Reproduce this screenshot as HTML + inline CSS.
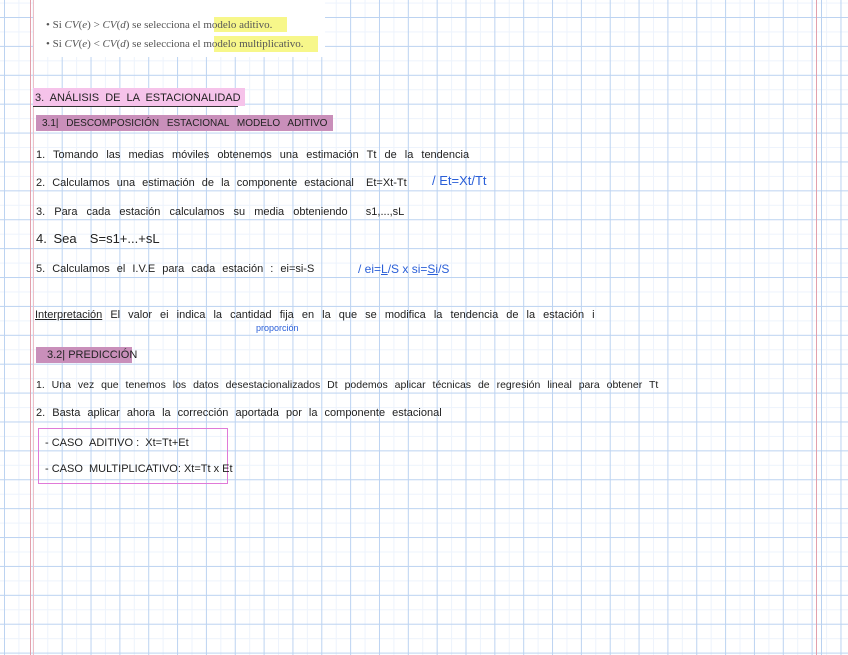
<!DOCTYPE html>
<html><head><meta charset="utf-8"><style>
html,body{margin:0;padding:0}
body{width:848px;height:655px;position:relative;overflow:hidden;background:#fff;
font-family:"Liberation Sans",sans-serif;color:#222;
background-image:
linear-gradient(90deg,transparent 0,transparent 27.85px,#bcd3f1 27.85px,#bcd3f1 28.85px),
linear-gradient(180deg,transparent 0,transparent 27.9px,#bcd3f1 27.9px,#bcd3f1 28.9px),
linear-gradient(90deg,transparent 0,transparent 13.4px,#edf3fc 13.4px,#edf3fc 14.4px,transparent 14.4px),
linear-gradient(180deg,transparent 0,transparent 13.45px,#edf3fc 13.45px,#edf3fc 14.45px,transparent 14.45px);
background-size:28.85px 28.9px,28.85px 28.9px,28.85px 28.9px,28.85px 28.9px;
background-position:5px 0,0 18px,5px 0,0 18px;}
.m{position:absolute;top:0;bottom:0;width:1px;background:#e2a0ac}
.t{position:absolute;white-space:nowrap;font-size:12px;line-height:14px}
.b{color:#2a5fd8}
.hl{position:absolute}
</style></head><body>
<div class="m" style="left:30px"></div><div class="m" style="left:33px;background:#ecc0c8"></div>
<div class="m" style="left:816px"></div><div class="m" style="left:821px;background:#b9d1f0"></div>
<div style="position:absolute;left:34px;top:0;width:291px;height:57px;background:#fff"></div>
<div class="hl" style="left:214px;top:17px;width:73px;height:15px;background:#f7f78a"></div>
<div class="hl" style="left:214px;top:36px;width:104px;height:16px;background:#f7f78a"></div>
<div class="t" style="left:46px;top:18px;font-family:'Liberation Serif',serif;font-size:11px;color:#555">• Si <i>CV</i>(<i>e</i>) &gt; <i>CV</i>(<i>d</i>) se selecciona el modelo aditivo.</div>
<div class="t" style="left:46px;top:37px;font-family:'Liberation Serif',serif;font-size:11px;color:#555">• Si <i>CV</i>(<i>e</i>) &lt; <i>CV</i>(<i>d</i>) se selecciona el modelo multiplicativo.</div>

<div class="hl" style="left:33px;top:88px;width:212px;height:18px;background:#f6c3ea"></div>
<div class="hl" style="left:33px;top:106px;width:205px;height:1px;background:#333"></div>
<div class="t" style="left:35px;top:91px;font-size:11px;word-spacing:3px">3. ANÁLISIS DE LA ESTACIONALIDAD</div>
<div class="hl" style="left:36px;top:115px;width:297px;height:16px;background:#c98fba"></div>
<div class="t" style="left:42px;top:117px;font-size:10px;word-spacing:5px">3.1| DESCOMPOSICIÓN ESTACIONAL MODELO ADITIVO</div>

<div class="t" style="left:36px;top:148px;font-size:11px;word-spacing:5px">1. Tomando las medias móviles obtenemos una estimación Tt de la tendencia</div>
<div class="t" style="left:36px;top:176px;font-size:11px;word-spacing:4px">2. Calculamos una estimación de la componente estacional</div>
<div class="t" style="left:366px;top:176px;font-size:11px">Et=Xt-Tt</div>
<div class="t b" style="left:432px;top:174px;font-size:13px">/ Et=Xt/Tt</div>
<div class="t" style="left:36px;top:205px;font-size:11px;word-spacing:6px">3. Para cada estación calculamos su media obteniendo &nbsp;s1,...,sL</div>
<div class="t" style="left:36px;top:232px;font-size:13px;word-spacing:3px">4. Sea &nbsp;S=s1+...+sL</div>
<div class="t" style="left:36px;top:262px;font-size:11px;word-spacing:4px">5. Calculamos el I.V.E para cada estación : ei=si-S</div>
<div class="t b" style="left:358px;top:262px;font-size:12px">/ ei=<u>L</u>/S x si=<u>Si</u>/S</div>

<div class="t" style="left:35px;top:308px;font-size:11px;word-spacing:5px"><u>Interpretación</u> El valor ei indica la cantidad fija en la que se modifica la tendencia de la estación i</div>
<div class="t b" style="left:256px;top:321px;font-size:9px">proporción</div>

<div class="hl" style="left:36px;top:347px;width:96px;height:16px;background:#c98fba"></div>
<div class="t" style="left:47px;top:348px;font-size:11px">3.2| PREDICCIÓN</div>
<div class="t" style="left:36px;top:378px;font-size:10.5px;word-spacing:4px">1. Una vez que tenemos los datos desestacionalizados Dt podemos aplicar técnicas de regresión lineal para obtener Tt</div>
<div class="t" style="left:36px;top:406px;font-size:11px;word-spacing:4px">2. Basta aplicar ahora la corrección aportada por la componente estacional</div>
<div class="hl" style="left:38px;top:428px;width:190px;height:56px;border:1px solid #e07ad8;box-sizing:border-box"></div>
<div class="t" style="left:45px;top:436px;font-size:11px">- CASO &nbsp;ADITIVO : &nbsp;Xt=Tt+Et</div>
<div class="t" style="left:45px;top:462px;font-size:11px">- CASO &nbsp;MULTIPLICATIVO: Xt=Tt x Et</div>
</body></html>
